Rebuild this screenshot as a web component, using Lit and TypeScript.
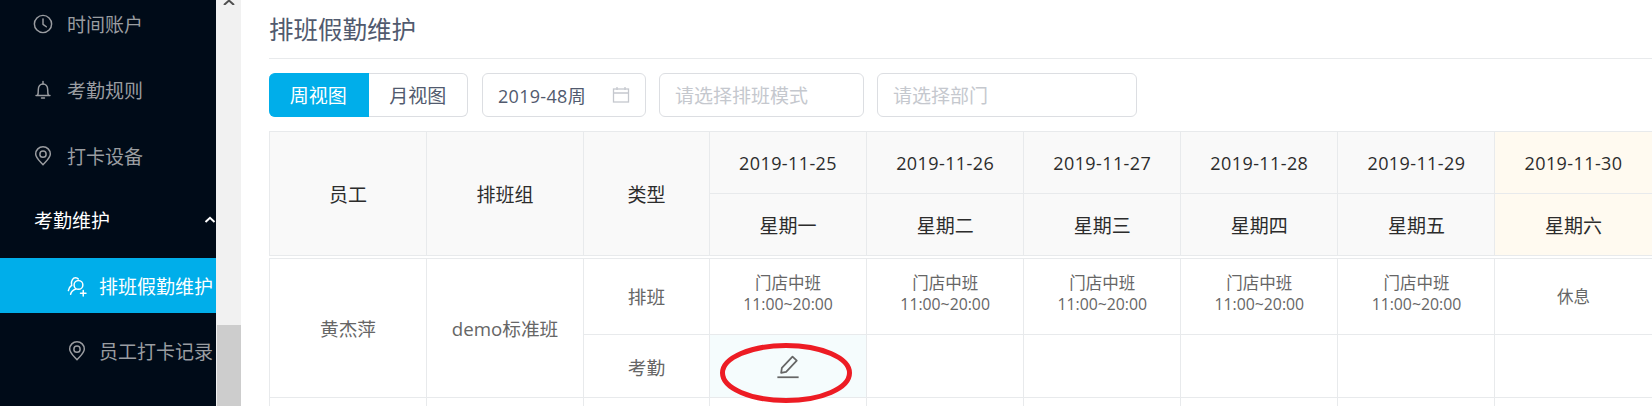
import { LitElement, html, css, svg } from "lit";
import { customElement } from "lit/decorators.js";

const days = [
  ["2019-11-25", "星期一"],
  ["2019-11-26", "星期二"],
  ["2019-11-27", "星期三"],
  ["2019-11-28", "星期四"],
  ["2019-11-29", "星期五"],
  ["2019-11-30", "星期六"],
];

const icon = (body: unknown, cls = "ico") =>
  html`<svg class=${cls} viewBox="0 0 24 24" fill="none" stroke="currentColor" stroke-width="1.6" stroke-linecap="round" stroke-linejoin="round">${body}</svg>`;

const clock = svg`<circle cx="12" cy="12" r="9.4"/><path d="M12 6.400V12.400L15.600 15"/>`;
const bell = svg`<path d="M4.400 18h15.200M6 18c.8-1.400.9-3 .9-6.600C6.900 8 9 5.400 12 5.400s5.100 2.600 5.100 6c0 3.600.1 5.200.9 6.600"/><path d="M12 2.800v2.600M10.400 20.800h3.200"/>`;
const pin = svg`<path d="M12 21.600C8 17.200 4 14 4 9.900a8 8 0 0 1 16 0c0 4.100-4 7.300-8 11.700z"/><circle cx="12" cy="10" r="3.400"/>`;
const userAdd = svg`<circle cx="13.600" cy="10.800" r="4.800"/><path d="M5 21c.8-3 3-5 5.600-5.800M6 10C5.600 6 7.600 3 10.400 3c1.400 0 2.400.6 3 1.400M6.400 11C4.400 12.400 3 14.400 2.600 17"/><path d="M15.800 20h6M18.800 17v6"/>`;

@customElement("app-root")
export class AppRoot extends LitElement {
  static styles = css`
    :host {
      display: flex;
      width: 1652px;
      height: 406px;
      overflow: hidden;
      background: #fff;
      font-family: "Open Sans", "Noto Sans CJK SC", sans-serif;
      color: #515a6e;
    }
    .side {
      width: 216px;
      flex: none;
      background: #000b18;
      color: #9a9da1;
      font-size: 19px;
      overflow: hidden;
      white-space: nowrap;
    }
    .menu {
      display: flex;
      flex-direction: column;
      margin-top: -9px;
    }
    .item {
      height: 66px;
      display: flex;
      align-items: center;
      gap: 13px;
      padding-left: 32px;
      flex: none;
    }
    .parent {
      color: #fff;
      padding-left: 34px;
      justify-content: space-between;
      padding-right: 0;
      margin-top: -2px;
    }
    .chev {
      width: 12px;
      height: 12px;
      color: #fff;
    }
    .sub {
      display: flex;
      flex-direction: column;
      gap: 10px;
      margin-top: 5px;
    }
    .subitem {
      height: 55px;
      display: flex;
      align-items: center;
      gap: 11px;
      padding-left: 66px;
      margin-right: -10px;
    }
    .subitem.on {
      background: #00aeea;
      color: #fff;
      margin-right: 0;
    }
    .ico {
      width: 22px;
      height: 22px;
      flex: none;
    }
    .bar {
      width: 25px;
      flex: none;
      background: #f1f1f1;
      display: flex;
      flex-direction: column;
      justify-content: space-between;
      align-items: flex-end;
    }
    .arrow {
      width: 14px;
      height: 5px;
      align-self: center;
      color: #505050;
    }
    .thumb {
      width: 24px;
      height: 81px;
      background: #cdcdcd;
    }
    .main {
      flex: none;
      width: 1383px;
      margin-left: 28px;
      min-width: 0;
    }
    h1 {
      margin: 0;
      height: 58px;
      box-sizing: content-box;
      border-bottom: 1px solid #e8eaec;
      font-size: 24.500px;
      font-weight: 400;
      line-height: 60px;
      white-space: nowrap;
    }
    .tools {
      display: flex;
      gap: 13px;
      margin-top: 14px;
      height: 44px;
    }
    .seg {
      display: flex;
      width: 199px;
      margin-right: 1px;
      font-size: 19px;
    }
    .seg div {
      flex: 1;
      display: flex;
      align-items: center;
      justify-content: center;
      border: 1px solid #dcdee2;
      border-left: 0;
      border-radius: 0 6px 6px 0;
    }
    .seg div.on {
      background: #00aeea;
      border-color: #00aeea;
      color: #fff;
      border-radius: 6px 0 0 6px;
    }
    .input {
      box-sizing: border-box;
      border: 1px solid #dcdee2;
      border-radius: 6px;
      display: flex;
      align-items: center;
      justify-content: space-between;
      padding: 0 15px;
      font-size: 19px;
      white-space: nowrap;
    }
    .input.date {
      width: 164px;
      font-size: 18px;
      letter-spacing: 0.300px;
    }
    .input.mode {
      width: 205px;
      color: #c5c8ce;
    }
    .input.dept {
      width: 260px;
      color: #c5c8ce;
    }
    .cal {
      width: 18px;
      height: 18px;
      color: #c5c8ce;
    }
    .grid {
      display: flex;
      flex-direction: column;
      gap: 2px;
      margin-top: 14px;
    }
    table {
      border-collapse: collapse;
      table-layout: fixed;
      width: 1383px;
    }
    td,
    th {
      border: 1px solid #e8eaec;
      text-align: center;
      font-weight: 400;
      padding: 0;
    }
    th {
      background: #f9f9f9;
      color: #2c2c2c;
      font-size: 19px;
      height: 61px;
    }
    th.date {
      font-size: 18px;
      letter-spacing: 0.400px;
    }
    th.we {
      background: #fffaf0;
    }
    td {
      color: #666;
      font-size: 16.500px;
    }
    td.big {
      font-size: 18.700px;
    }
    .r1 {
      height: 76px;
      line-height: 21px;
    }
    .r2 {
      height: 63px;
    }
    .r3 {
      height: 40px;
    }
    .pad {
      padding-bottom: 7px;
    }
    .time {
      font-size: 15.800px;
    }
    .mark {
      position: relative;
      background: #f5fcfd;
    }
    .pen {
      width: 30px;
      height: 30px;
      color: #666;
      display: block;
      margin: 0 auto;
    }
    .ring {
      position: absolute;
      left: 10px;
      top: 8px;
      width: 132px;
      height: 60px;
      overflow: visible;
      pointer-events: none;
    }
  `;

  private cols() {
    return html`<colgroup>
      <col style="width:157px" /><col style="width:157px" /><col style="width:126px" />
      ${days.map(() => html`<col style="width:157.100px" />`)}
    </colgroup>`;
  }

  render() {
    return html`
      <nav class="side">
        <div class="menu">
          <div class="item">${icon(clock)}<span>时间账户</span></div>
          <div class="item">${icon(bell)}<span>考勤规则</span></div>
          <div class="item">${icon(pin)}<span>打卡设备</span></div>
          <div class="item parent">
            <span>考勤维护</span>
            <svg class="chev" viewBox="0 0 12 12" fill="none" stroke="currentColor" stroke-width="2"><path d="M1.500 8L6 3.800 10.500 8" /></svg>
          </div>
          <div class="sub">
            <div class="subitem on">${icon(userAdd)}<span>排班假勤维护</span></div>
            <div class="subitem">${icon(pin)}<span>员工打卡记录</span></div>
          </div>
        </div>
      </nav>
      <div class="bar">
        <svg class="arrow" viewBox="0 0 14 5" fill="none" stroke="currentColor" stroke-width="2"><path d="M2 5L7 0.500 12 5" /></svg>
        <div class="thumb"></div>
      </div>
      <main class="main">
        <h1>排班假勤维护</h1>
        <div class="tools">
          <div class="seg"><div class="on">周视图</div><div>月视图</div></div>
          <div class="input date">
            <span>2019-48周</span>
            <svg class="cal" viewBox="0 0 18 18" fill="none" stroke="currentColor" stroke-width="1.300"><rect x="1.500" y="3" width="15" height="13" /><path d="M1.500 7h15M5 1v3M13 1v3" /></svg>
          </div>
          <div class="input mode">请选择排班模式</div>
          <div class="input dept">请选择部门</div>
        </div>
        <div class="grid">
          <table>
            ${this.cols()}
            <tr>
              <th rowspan="2">员工</th>
              <th rowspan="2">排班组</th>
              <th rowspan="2">类型</th>
              ${days.map((d, i) => html`<th class="date ${i === 5 ? "we" : ""}">${d[0]}</th>`)}
            </tr>
            <tr>
              ${days.map((d, i) => html`<th class=${i === 5 ? "we" : ""}>${d[1]}</th>`)}
            </tr>
          </table>
          <table>
            ${this.cols()}
            <tr class="r1">
              <td rowspan="2" class="big">黄杰萍</td>
              <td rowspan="2" class="big">demo标准班</td>
              <td class="big">排班</td>
              ${[0, 1, 2, 3, 4].map(() => html`<td><div class="pad">门店中班<br /><span class="time">11:00~20:00</span></div></td>`)}
              <td>休息</td>
            </tr>
            <tr class="r2">
              <td class="big">考勤</td>
              <td class="mark">
                <svg class="pen" viewBox="0 0 24 24" fill="none" stroke="currentColor" stroke-width="1.400" stroke-linejoin="round"><path d="M3.500 21h17" /><path d="M6.500 17.500l.6-4L15.600 4.500l3.400 3.200-8.500 9z" /></svg>
                <svg class="ring" viewBox="0 0 132 60"><ellipse cx="66" cy="30" rx="63.500" ry="27.500" fill="none" stroke="#ed1c24" stroke-width="5" /></svg>
              </td>
              ${[0, 1, 2, 3, 4].map(() => html`<td></td>`)}
            </tr>
            <tr class="r3">${Array.from({ length: 9 }, () => html`<td></td>`)}</tr>
          </table>
        </div>
      </main>
    `;
  }
}
